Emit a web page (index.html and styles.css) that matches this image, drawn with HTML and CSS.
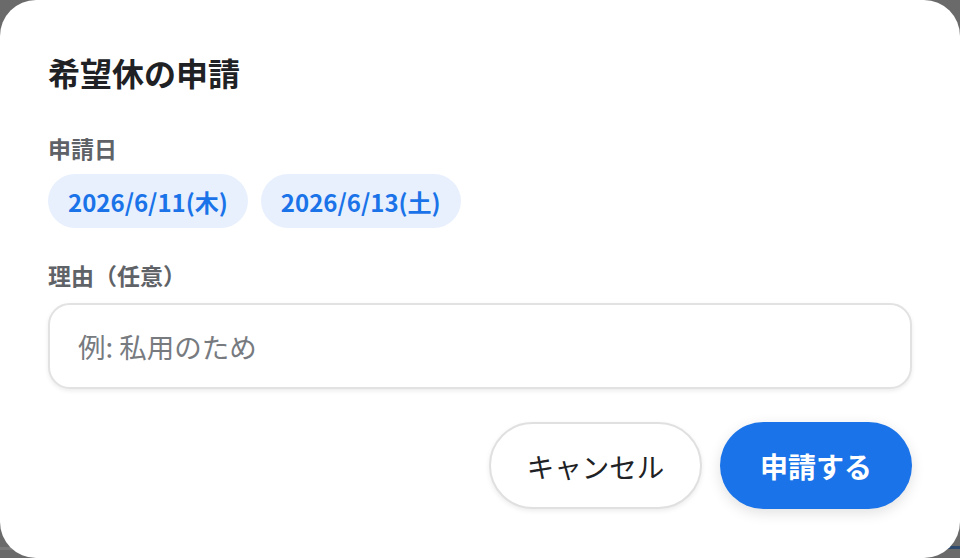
FILE: index.html
```html
<!DOCTYPE html>
<html lang="ja">
<head>
<meta charset="utf-8">
<title>希望休の申請</title>
<link rel="stylesheet" href="styles.css">
</head>
<body>
<div class="backdrop">
  <div class="page-strip-left"></div>
  <div class="page-strip-right"></div>
  <div class="dialog">
    <h1 class="title">希望休の申請</h1>
    <div class="label label-dates">申請日</div>
    <div class="chips">
      <span class="chip">2026/6/11(木)</span>
      <span class="chip">2026/6/13(土)</span>
    </div>
    <div class="label label-reason">理由（任意）</div>
    <input class="reason" type="text" placeholder="例: 私用のため">
    <div class="actions">
      <button class="btn btn-cancel">キャンセル</button>
      <button class="btn btn-submit">申請する</button>
    </div>
  </div>
</div>
</body>
</html>
```

FILE: styles.css
```css
html, body {
  margin: 0;
  padding: 0;
  width: 960px;
  height: 558px;
  overflow: hidden;
}

body {
  background: #6a6a6a;
  font-family: "Noto Sans CJK JP", "Noto Sans", sans-serif;
}

.backdrop {
  position: relative;
  width: 960px;
  height: 558px;
}

.page-strip-left {
  position: absolute;
  left: 0;
  top: 547px;
  width: 120px;
  height: 3px;
  background: #7a7a7a;
}

.page-strip-right {
  position: absolute;
  right: 0;
  top: 546px;
  width: 120px;
  height: 3px;
  background: #2d4a6e;
}

.dialog {
  position: relative;
  box-sizing: border-box;
  width: 960px;
  height: 558px;
  background: #ffffff;
  border-radius: 36px;
  padding: 48px 48px 49px 48px;
  display: flex;
  flex-direction: column;
}

.title {
  margin: 0;
  font-size: 32px;
  line-height: 48px;
  font-weight: 700;
  color: #202124;
}

.label {
  font-size: 23px;
  line-height: 32px;
  font-weight: 700;
  color: #5f6368;
}

.label-dates {
  margin-top: 36px;
}

.chips {
  display: flex;
  gap: 13px;
  margin-top: 10px;
}

.chip {
  display: inline-flex;
  align-items: center;
  height: 54px;
  padding: 0 20px;
  border-radius: 27px;
  background: #e8f0fe;
  color: #1a73e8;
  font-size: 24px;
  font-weight: 700;
}

.label-reason {
  margin-top: 31px;
}

.reason {
  margin-top: 12px;
  box-sizing: border-box;
  width: 100%;
  height: 86px;
  border: 2px solid #e2e2e2;
  border-radius: 22px;
  padding: 0 28px;
  font-family: "Noto Sans CJK JP", "Noto Sans", sans-serif;
  font-size: 27.5px;
  color: #202124;
  background: #ffffff;
  box-shadow: 0 2px 4px rgba(0, 0, 0, 0.08);
  outline: none;
}

.reason::placeholder {
  color: #777b80;
}

.actions {
  margin-top: 33px;
  display: flex;
  justify-content: flex-end;
  gap: 18px;
}

.btn {
  box-sizing: border-box;
  height: 87px;
  border-radius: 44px;
  font-family: "Noto Sans CJK JP", "Noto Sans", sans-serif;
  font-size: 27.5px;
  cursor: pointer;
}

.btn-cancel {
  width: 213px;
  background: #ffffff;
  border: 2px solid #e0e0e0;
  color: #202124;
  font-weight: 400;
  box-shadow: 0 2px 5px rgba(0, 0, 0, 0.08);
}

.btn-submit {
  width: 192px;
  background: #1a73e8;
  border: none;
  color: #ffffff;
  font-weight: 700;
  font-size: 28px;
  box-shadow: 0 4px 14px rgba(0, 0, 0, 0.12);
}
```
